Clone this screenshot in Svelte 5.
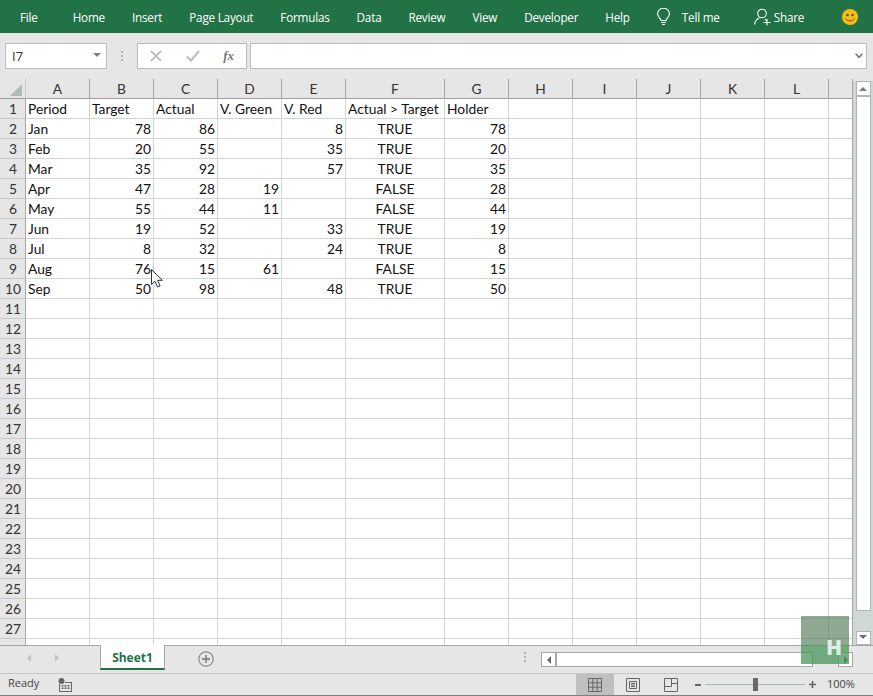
<script>
  const tabs = ['File', 'Home', 'Insert', 'Page Layout', 'Formulas', 'Data', 'Review', 'View', 'Developer', 'Help'];
  const columns = ['A', 'B', 'C', 'D', 'E', 'F', 'G', 'H', 'I', 'J', 'K', 'L', ''];

  const header = ['Period', 'Target', 'Actual', 'V. Green', 'V. Red', 'Actual > Target', 'Holder'];
  const data = [
    ['Jan', 78, 86, '', 8, 'TRUE', 78],
    ['Feb', 20, 55, '', 35, 'TRUE', 20],
    ['Mar', 35, 92, '', 57, 'TRUE', 35],
    ['Apr', 47, 28, 19, '', 'FALSE', 28],
    ['May', 55, 44, 11, '', 'FALSE', 44],
    ['Jun', 19, 52, '', 33, 'TRUE', 19],
    ['Jul', 8, 32, '', 24, 'TRUE', 8],
    ['Aug', 76, 15, 61, '', 'FALSE', 15],
    ['Sep', 50, 98, '', 48, 'TRUE', 50]
  ];

  const pad = (row) => [...row, '', '', '', '', '', ''];
  const rows = [];
  for (let i = 0; i < 28; i++) {
    let cells = Array(13).fill('');
    if (i === 0) cells = pad(header);
    else if (i <= data.length) cells = pad(data[i - 1]);
    // row 28 is only a sliver at the bottom, its number doesn't show
    rows.push({ n: i < 27 ? i + 1 : '', cells });
  }

  const cellClass = (i, r, v) => {
    if (r === 1 || v === '') return 'cell';
    if (i === 0) return 'cell';
    if (i === 5) return 'cell mid';
    return 'cell num';
  };
</script>

<div class="app">
  <header class="ribbon">
    {#each tabs as t}
      <span class="tab">{t}</span>
    {/each}
    <svg class="bulb" width="13" height="18" viewBox="0 0 13 18" fill="none" stroke="#fff" stroke-width="1.1">
      <path d="M4 12.5c0-2-3.400-3.300-3.400-6.800a5.900 5.400 0 0 1 11.800 0c0 3.500-3.400 4.800-3.400 6.800z" />
      <path d="M4.200 14.500h4.600M5 16.500h3" />
    </svg>
    <span class="tab tell">Tell me</span>
    <svg class="person" width="17" height="18" viewBox="0 0 17 18" fill="none" stroke="#fff" stroke-width="1.1">
      <circle cx="8" cy="5.500" r="4.300" />
      <path d="M.6 16.500c.3-3.500 2.600-5.700 4.600-6.500M11 11.500c.6.300 1 .6 1.400 1M9.500 14.500h7M13 11v6.500" />
    </svg>
    <span class="tab share">Share</span>
    <svg class="smile" width="16" height="16" viewBox="0 0 16 16">
      <circle cx="8" cy="8" r="8" fill="#f7bd14" />
      <circle cx="5.500" cy="6" r="1.200" fill="#5b4a14" />
      <circle cx="10.500" cy="6" r="1.200" fill="#5b4a14" />
      <path d="M3.500 9.500c1.500 3.200 7.500 3.200 9 0" fill="none" stroke="#5b4a14" stroke-width="1" />
    </svg>
  </header>

  <div class="fbar">
    <div class="namebox">
      <span>I7</span>
      <i class="tri-down"></i>
    </div>
    <div class="dots"><i></i><i></i><i></i></div>
    <div class="fbtns">
      <svg width="12" height="12" viewBox="0 0 12 12" fill="none" stroke="#bfbfbf" stroke-width="1.800">
        <path d="M1 1l10 10M11 1L1 11" />
      </svg>
      <svg width="14" height="12" viewBox="0 0 14 12" fill="none" stroke="#bfbfbf" stroke-width="2.200">
        <path d="M1 6.500l4 4L13 1" />
      </svg>
      <span class="fx">fx</span>
    </div>
    <div class="finput">
      <svg width="8" height="6" viewBox="0 0 8 6" fill="none" stroke="#777" stroke-width="1.600">
        <path d="M.6.800L4 4.400 7.400.800" />
      </svg>
    </div>
  </div>

  <div class="main">
    <div class="sheet">
      <div class="hrow">
        <div class="corner"><i></i></div>
        {#each columns as c, i}
          <div class="colhead" class:wide={i === 5}>{c}</div>
        {/each}
      </div>
      {#each rows as row}
        <div class="row">
          <div class="rowhead">{row.n}</div>
          {#each row.cells as v, i}
            <div class={cellClass(i, row.n, v)} class:wide={i === 5}>{v}</div>
          {/each}
        </div>
      {/each}
    </div>
    <div class="vscroll">
      <div class="sbtn"><i class="tri-up"></i></div>
      <div class="vthumb"></div>
      <div class="sbtn down"><i class="tri-down small"></i></div>
    </div>
  </div>

  <div class="tabbar">
    <div class="nav">
      <i class="tri-left pale"></i>
      <i class="tri-right pale"></i>
    </div>
    <div class="sheettab">Sheet1</div>
    <svg class="plus" width="16" height="16" viewBox="0 0 16 16" fill="none" stroke="#8a8a8a">
      <circle cx="8" cy="8" r="7.200" stroke-width="1.200" />
      <path d="M8 4v8M4 8h8" stroke-width="1.800" />
    </svg>
    <div class="dots tabdots"><i></i><i></i><i></i></div>
    <div class="hscroll">
      <div class="hbtn"><i class="tri-left"></i></div>
      <div class="hthumb"></div>
      <div class="hbtn end"><i class="tri-right"></i></div>
    </div>
  </div>

  <footer class="status">
    <span class="ready">Ready</span>
    <svg class="macro" width="14" height="14" viewBox="0 0 14 14" fill="#666">
      <circle cx="3.500" cy="3" r="3" />
      <path d="M1 6h1v7h11V5H7V4h7v10H1z" />
      <path d="M3.500 7h2v1.500h-2zM6.500 7h2v1.500h-2zM9.500 7h2v1.500h-2zM3.500 9.500h2V11h-2zM6.500 9.500h2V11h-2zM9.500 9.500h2V11h-2z" />
    </svg>
    <div class="views">
      <div class="view on">
        <svg width="14" height="14" viewBox="0 0 14 14" fill="none" stroke="#666">
          <path d="M.5.500h13v13H.5zM.5 4.800h13M.5 9.200h13M4.800.500v13M9.200.500v13" />
        </svg>
      </div>
      <div class="view">
        <svg width="14" height="14" viewBox="0 0 14 14" fill="none" stroke="#666">
          <path d="M.5.500h13v13H.5zM3.500 3.500h7v7h-7zM5 5.500h4M5 7h4M5 8.500h4" />
        </svg>
      </div>
      <div class="view">
        <svg width="14" height="14" viewBox="0 0 14 14" fill="none" stroke="#666">
          <path d="M.5.500h13v13H.5zM.5 8.500h7V.5M7.500 5.500h6" />
        </svg>
      </div>
    </div>
    <div class="zoom">
      <i class="minus"></i>
      <div class="track"><i></i></div>
      <svg width="7" height="7" viewBox="0 0 7 7" stroke="#666" stroke-width="1.600">
        <path d="M0 3.500h7M3.500 0v7" />
      </svg>
      <span class="pct">100%</span>
    </div>
  </footer>

  <svg class="cursor" width="12" height="19" viewBox="0 0 12 19">
    <path d="M.5.500v15l3.500-3.300 2.500 5.800 2.600-1.100-2.500-5.600h4.800z" fill="#fff" stroke="#333" stroke-width="1" />
  </svg>

  <div class="mark"><span>H</span></div>
</div>

<style>
  :global(body) {
    margin: 0;
    background: #e6e6e6;
  }

  .app {
    position: relative;
    display: flex;
    flex-direction: column;
    width: 873px;
    height: 696px;
    overflow: hidden;
    background: #e6e6e6;
    font-family: 'Open Sans', sans-serif;
  }

  .ribbon {
    display: flex;
    align-items: center;
    flex: none;
    gap: 27px;
    height: 33px;
    padding-left: 20px;
    box-sizing: border-box;
    background: #217346;
    color: #fff;
    font-size: 11.7px;
    letter-spacing: -0.2px;
  }

  .tab,
  .ribbon svg {
    flex: none;
    white-space: nowrap;
  }

  .tab:first-child {
    margin-right: 8px;
  }

  .tell {
    margin-left: -15px;
  }

  .person {
    margin-left: 7px;
  }

  .share {
    margin-left: -24px;
  }

  .smile {
    margin-left: 11px;
  }

  .fbar {
    display: flex;
    flex: none;
    align-items: stretch;
    height: 46px;
    padding: 10px 6px 10px 5px;
    box-sizing: border-box;
  }

  .namebox,
  .fbtns,
  .finput {
    display: flex;
    align-items: center;
    box-sizing: border-box;
    background: #fff;
    border: 1px solid #bdbdbd;
  }

  .namebox {
    justify-content: space-between;
    width: 102px;
    padding: 0 5px 0 6px;
    font-size: 13px;
    color: #333;
  }

  .dots {
    display: flex;
    flex-direction: column;
    justify-content: center;
    gap: 2px;
    width: 30px;
    align-items: center;
  }

  .dots i {
    width: 2px;
    height: 2px;
    background: #a9b5b1;
  }

  .fbtns {
    justify-content: space-between;
    width: 110px;
    padding: 0 12px 0 12px;
  }

  .fx {
    font-family: 'Liberation Serif', serif;
    font-style: italic;
    font-weight: bold;
    font-size: 13px;
    color: #777;
  }

  .finput {
    flex: 1;
    justify-content: flex-end;
    margin-left: 3px;
    padding-right: 3px;
  }

  .tri-down {
    width: 0;
    height: 0;
    margin-top: -2px;
    border-left: 4px solid transparent;
    border-right: 4px solid transparent;
    border-top: 4px solid #807d7d;
  }

  .tri-down.small {
    border-top-color: #6c6680;
  }

  .tri-up {
    width: 0;
    height: 0;
    border-left: 4px solid transparent;
    border-right: 4px solid transparent;
    border-bottom: 4px solid #807d7d;
  }

  .tri-left,
  .tri-right {
    width: 0;
    height: 0;
    border-top: 4px solid transparent;
    border-bottom: 4px solid transparent;
  }

  .tri-left {
    border-right: 4px solid #666;
  }

  .tri-right {
    border-left: 4px solid #666;
  }

  .tri-left.pale {
    border-right-color: #c4c4c4;
  }

  .tri-right.pale {
    border-left-color: #c4c4c4;
  }

  .main {
    display: flex;
    flex: none;
    height: 566px;
    overflow: hidden;
  }

  .sheet {
    flex: none;
    width: 853px;
    height: 566px;
    box-sizing: border-box;
    border-right: 1px solid #a6a6a6;
    overflow: hidden;
    background: #fff;
  }

  .hrow,
  .row {
    display: flex;
    height: 20px;
    box-sizing: border-box;
    font-family: Lato, sans-serif;
    font-size: 13.8px;
    line-height: 20px;
  }

  .hrow {
    background: #e6e6e6;
    border-bottom: 1px solid #a09c9c;
    color: #333;
  }

  .corner {
    flex: none;
    position: relative;
    width: 26px;
    box-sizing: border-box;
    border-right: 1px solid #c6c6c6;
  }

  .corner i {
    position: absolute;
    right: 3px;
    bottom: 2px;
    width: 0;
    height: 0;
    border-left: 12px solid transparent;
    border-bottom: 12px solid #b0b9b6;
  }

  .colhead {
    flex: none;
    width: 64px;
    box-sizing: border-box;
    border-right: 1px solid #a8a4a4;
    text-align: center;
  }

  .colhead:last-child {
    border-right: 0;
  }

  .rowhead {
    flex: none;
    width: 26px;
    box-sizing: border-box;
    padding-left: 1px;
    background: #e6e6e6;
    border-right: 1px solid #a8a8a8;
    border-bottom: 1px solid #c8c8c8;
    color: #333;
    text-align: center;
  }

  .cell {
    flex: none;
    width: 64px;
    box-sizing: border-box;
    padding: 0 2px;
    border-right: 1px solid #ced6d3;
    border-bottom: 1px solid #ced6d3;
    color: #111;
    white-space: nowrap;
  }

  .cell.num {
    text-align: right;
  }

  .cell.mid {
    text-align: center;
  }

  .colhead.wide,
  .cell.wide {
    width: 99px;
  }

  .vscroll {
    display: flex;
    flex-direction: column;
    align-items: center;
    flex: 1;
    padding: 2px 0 0 0;
    background: linear-gradient(#e6e6e6 2px, #d0d8d5 2px);
  }

  .sbtn {
    display: flex;
    align-items: center;
    justify-content: center;
    flex: none;
    width: 15px;
    height: 15px;
    box-sizing: border-box;
    background: #fff;
    border: 1px solid #b4b4b4;
  }

  .sbtn.down {
    height: 14px;
    margin-top: auto;
  }

  .vthumb {
    flex: none;
    width: 15px;
    height: 515px;
    box-sizing: border-box;
    background: #fff;
    border: 1px solid #b4b4b4;
  }

  .tabbar {
    position: relative;
    display: flex;
    align-items: flex-start;
    flex: none;
    height: 28px;
    box-sizing: border-box;
    border-top: 1px solid #a6a6a6;
  }

  .nav {
    display: flex;
    align-items: center;
    gap: 24px;
    width: 100px;
    height: 24px;
    box-sizing: border-box;
    padding-left: 27px;
  }

  .sheettab {
    width: 65px;
    height: 25px;
    margin-top: -1px;
    box-sizing: border-box;
    background: #fff;
    border: 1px solid #a6a6a6;
    border-top: 0;
    border-bottom: 2px solid #217346;
    color: #217346;
    font-size: 12px;
    font-weight: 700;
    line-height: 26px;
    text-align: center;
  }

  .plus {
    margin: 5px 0 0 33px;
  }

  .tabdots {
    width: 8px;
    margin: 6px 0 0 307px;
  }

  .hscroll {
    display: flex;
    height: 15px;
    margin: 6px 0 0 12px;
    width: 312px;
  }

  .hbtn {
    display: flex;
    align-items: center;
    justify-content: center;
    flex: none;
    width: 15px;
    box-sizing: border-box;
    background: #fff;
    border: 1px solid #a6a6a6;
  }

  .hbtn.end {
    margin-left: auto;
  }

  .hthumb {
    flex: none;
    width: 257px;
    background: #fff;
    box-sizing: border-box;
    border: 1px solid #a6a6a6;
  }

  .status {
    display: flex;
    align-items: center;
    flex: none;
    height: 23px;
    box-sizing: border-box;
    border-top: 1px solid #c6c6c6;
    border-bottom: 1px solid #7f7f7f;
    font-size: 11px;
    color: #444;
  }

  .ready {
    margin: 0 0 4px 8px;
  }

  .macro {
    margin-left: 19px;
  }

  .views {
    display: flex;
    align-self: stretch;
    margin-left: auto;
  }

  .view {
    display: flex;
    align-items: center;
    justify-content: center;
    width: 38px;
  }

  .view.on {
    background: #bfbfbf;
  }

  .zoom {
    display: flex;
    align-items: center;
    width: 183px;
    padding-left: 5px;
    box-sizing: border-box;
  }

  .minus {
    flex: none;
    width: 6px;
    height: 2px;
    background: #666;
  }

  .track {
    position: relative;
    flex: none;
    width: 100px;
    height: 1px;
    margin: 0 4px;
    background: #a9b8b5;
  }

  .track i {
    position: absolute;
    left: 48px;
    top: -6px;
    width: 5px;
    height: 13px;
    background: #6b6767;
  }

  .pct {
    margin: 0 0 3px 11px;
  }

  .cursor {
    position: absolute;
    left: 151px;
    top: 269px;
  }

  .mark {
    position: absolute;
    left: 801px;
    top: 616px;
    display: flex;
    align-items: flex-end;
    justify-content: flex-end;
    width: 48px;
    height: 48px;
    background: linear-gradient(rgba(95, 131, 98, 0.7) 29px, rgba(70, 150, 90, 0.75) 29px);
  }

  .mark span {
    margin: 0 7px 3px 0;
    color: rgba(255, 255, 255, 0.78);
    font-family: 'Open Sans', sans-serif;
    font-size: 21px;
    font-weight: 800;
    line-height: 28px;
  }
</style>
